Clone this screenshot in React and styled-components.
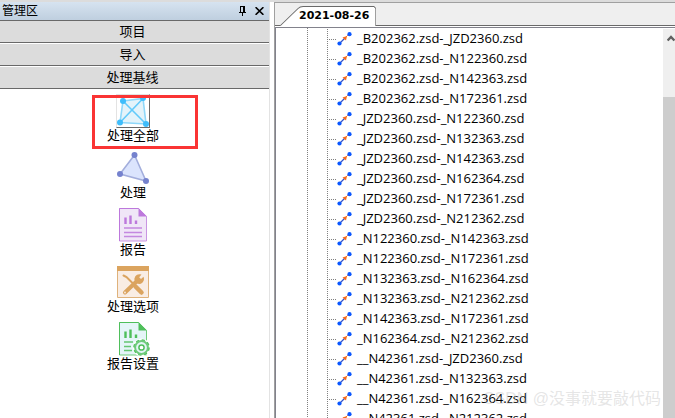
import React, { useState } from "react";
import styled, { createGlobalStyle } from "styled-components";

const GlobalStyle = createGlobalStyle`
    * {
        box-sizing: border-box;
    }

    body {
        margin: 0;
        overflow: hidden;
        background: #fff;
        color: #000;
        font-family: "Liberation Sans", "Noto Sans CJK SC", sans-serif;
        font-size: 13px;
    }

    button {
        margin: 0;
        padding: 0;
        border: 0;
        background: none;
        color: inherit;
        font: inherit;
    }
`;

// Layout
const Window = styled.div`
    display: flex;
    gap: 4px;
    height: 100vh;
    border-top: 2px solid #dcdcdc;
`;

const Sidebar = styled.aside`
    display: flex;
    flex-direction: column;
    flex: 0 0 40%;
    min-width: 0;
    border-right: 1px solid #e3e3e3;
`;

const SidebarHeader = styled.header`
    display: flex;
    align-items: center;
    height: 19px;
    padding: 0 1px 0 2px;
    border-bottom: 1px solid #696969;
    background: linear-gradient(180deg, #d6e3f0 0%, #bfcfdf 100%);
`;

const SidebarTitle = styled.h1`
    flex: 1;
    margin: 0;
    font-size: 12px;
    font-weight: 400;
    line-height: 18px;
`;

const HeaderButton = styled.button`
    display: flex;
    align-items: center;
    justify-content: center;
    width: 17px;
    height: 16px;
`;

const SectionButton = styled.button`
    height: 23px;
    padding-right: 4px;
    border-top: 1px solid #fff;
    border-bottom: 1px solid #696969;
    background: #dcdcdc;
    line-height: 20px;
    text-align: center;

    &:first-of-type {
        height: 22px;
        border-top: 0;
    }
`;

const ToolList = styled.div`
    display: flex;
    flex-direction: column;
    align-items: center;
    padding-top: 5px;
    padding-right: 3px;
`;

const ToolButton = styled.button`
    position: relative;
    display: flex;
    flex-direction: column;
    align-items: center;
    height: 57px;
    line-height: 16px;
`;

const ToolIcon = styled.span`
    display: flex;
    align-items: center;
    justify-content: center;
    width: 34px;
    height: 34px;
    border: 1px solid;
    border-color: ${({ $active }) =>
        $active ? "#e3e3e3 #696969 #696969 #e3e3e3" : "transparent"};
`;

const Highlight = styled.span`
    position: absolute;
    top: 1px;
    left: -15px;
    width: 106px;
    height: 54px;
    border: 3px solid #fa3434;
    pointer-events: none;
`;

const Main = styled.main`
    position: relative;
    display: flex;
    flex-direction: column;
    flex: 1;
    min-width: 0;
    border-top: 1px solid #a0a0a0;
    border-left: 1px solid #a0a0a0;
`;

const TabStrip = styled.div`
    display: flex;
    align-items: flex-end;
    height: 23px;
    padding-left: 5px;
    border-bottom: 1px solid #696969;
    background: #efefef;
`;

const Tab = styled.button`
    position: relative;
    height: 20px;
    margin-bottom: -1px;
    padding: 0 7px 0 19px;
    font-family: "DejaVu Sans", sans-serif;
    font-size: 11px;
    font-weight: 700;
    line-height: 20px;
`;

const TabShape = styled.svg`
    position: absolute;
    inset: 0;
    width: 100%;
    height: 100%;
`;

const TabLabel = styled.span`
    position: relative;
`;

const Pane = styled.div`
    display: flex;
    flex: 1;
    min-height: 0;
    margin-top: 1px;
    border-top: 1px solid #82828c;
    border-left: 1px solid #82828c;
`;

const Tree = styled.ul`
    flex: 1;
    min-width: 0;
    margin: 0;
    padding: 1px 0 0 31px;
    overflow: hidden;
    list-style: none;
    background:
        repeating-linear-gradient(180deg, #808080 0 1px, transparent 1px 2px)
            31px 0 / 1px 100% no-repeat,
        #fff;
`;

const TreeRow = styled.li`
    display: flex;
    align-items: center;
    height: 20px;
    padding-left: 20px;
    background: repeating-linear-gradient(
            180deg,
            #808080 0 1px,
            transparent 1px 2px
        )
        20px 0 / 1px 100% no-repeat;
    font-family: "Open Sans", sans-serif;
    font-size: 13px;
    line-height: 18px;
    white-space: nowrap;
`;

const Branch = styled.span`
    width: 10px;
    height: 1px;
    background: repeating-linear-gradient(
        90deg,
        #808080 0 1px,
        transparent 1px 2px
    );
`;

const RowLabel = styled.span`
    margin-left: 5px;
    padding-bottom: 2px;
`;

const Scrollbar = styled.div`
    display: flex;
    flex-direction: column;
    width: 12px;
    margin-top: 1px;
    overflow: hidden;
    background: #efefef;
`;

const ScrollUp = styled.button`
    display: flex;
    justify-content: flex-end;
    height: 17px;
    padding-top: 6px;
`;

const ScrollThumb = styled.div`
    flex: 1;
    margin-top: 51px;
    background: #cdcdcd;
`;

const Watermark = styled.span`
    position: absolute;
    right: 14px;
    bottom: 7px;
    color: rgba(190, 190, 190, 0.4);
    font-size: 16px;
    line-height: 24px;
    pointer-events: none;
`;

// Icons
const PinIcon = () => (
    <svg width="7" height="10" viewBox="0 0 7 10" shapeRendering="crispEdges">
        <path d="M1 0h5v6H1zM0 6h7v1H0zM3 7h1v3H3z" fill="#000" />
        <path d="M2 1h2v5H2z" fill="#cbd8e6" />
    </svg>
);

const CloseIcon = () => (
    <svg width="9" height="8" viewBox="0 0 9 8">
        <path d="M.6.2l7.8 7.6M8.4.2L.6 7.8" stroke="#000" strokeWidth="1.6" />
    </svg>
);

const NetworkIcon = () => (
    <svg width="32" height="32" viewBox="0 0 32 32">
        <path d="M6 6L26 3.5L29 29L3 27.5z" fill="#e4f3fa" />
        <g stroke="#8fd8fa" strokeWidth="1.6" fill="none">
            <path d="M6 6L26 3.5L29 29L3 27.5z" />
            <path d="M6 6L29 29M26 3.5L3 27.5" stroke="#62cafa" />
        </g>
        <g fill="#3fbdfb">
            <circle cx="6" cy="6" r="3" />
            <circle cx="26" cy="3" r="3" />
            <circle cx="29" cy="29" r="3" />
            <circle cx="3" cy="27.5" r="3" />
        </g>
    </svg>
);

const TriangleIcon = () => (
    <svg width="32" height="32" viewBox="0 0 32 32">
        <path
            d="M17.5 3L3 22L29 29z"
            fill="#dbe4fd"
            stroke="#a3aedc"
            strokeWidth="1.6"
        />
        <g fill="#7582ce">
            <circle cx="17.5" cy="3" r="3" />
            <circle cx="3" cy="22" r="3" />
            <circle cx="29" cy="29" r="3" />
        </g>
    </svg>
);

const ReportIcon = ({ color, light, fill, gear }) => (
    <svg width="32" height="34" viewBox="0 0 32 34" overflow="visible">
        <path d="M2.5.5h19l8 8v24.500h-27z" fill={fill} stroke={light} />
        <path d="M2.5.5h19M2.5 33V.5" stroke={color} fill="none" />
        <path d="M21.5 0L30 8.500h-8.500z" fill={color} />
        <path
            d="M8.500 9.500v6.500M13.500 7.500v8.500M19 12.500v3.500"
            stroke={color}
            strokeWidth="2.4"
        />
        <path
            d={gear ? "M7 20h9M7 24.500h7M7 28.500h8" : "M7 20h18M7 24.500h18M7 28.500h18"}
            stroke={color}
            strokeWidth="1.5"
            opacity="0.85"
        />
        {gear && (
            <g>
                <circle cx="24.500" cy="25.500" r="9" fill="#fff" />
                <circle
                    cx="24.500"
                    cy="25.500"
                    r="7.400"
                    fill="none"
                    stroke={color}
                    strokeWidth="1.8"
                    strokeDasharray="3.2 2.611"
                />
                <circle
                    cx="24.500"
                    cy="25.500"
                    r="6.400"
                    fill="#e5f5f8"
                    stroke={light}
                    strokeWidth="2"
                />
                <circle
                    cx="24.500"
                    cy="25.500"
                    r="2.600"
                    fill="#fff"
                    stroke={color}
                    strokeWidth="1.5"
                />
            </g>
        )}
    </svg>
);

const OptionsIcon = () => (
    <svg width="32" height="32" viewBox="0 0 32 32">
        <path d="M.5.5h31v31H.5z" fill="#f9ede4" stroke="#dfb27b" />
        <path d="M0 0h32v5H0z" fill="#dba45f" />
        <g stroke="#dba45f" strokeLinecap="round" fill="none">
            <path d="M6.500 9.500l3 1.500 8 8" strokeWidth="2" />
            <path d="M18.500 20.500l6 6" strokeWidth="4.5" />
            <path d="M20.500 14.500L8 26.500" strokeWidth="4" />
        </g>
        <path
            d="M18 15.500a5 5 0 0 1 5-7.300l1.500.3-2.300 2.700 1.800 1.800 2.500-2.200a5 5 0 0 1-6.500 6.700z"
            fill="#dba45f"
        />
        <circle cx="8" cy="26.500" r="0.9" fill="#f9ede4" />
    </svg>
);

const BaselineIcon = () => (
    <svg width="15" height="14" viewBox="0 0 15 14">
        <path d="M2.500 11.500L8 6" stroke="#3454c8" strokeWidth="1.2" />
        <path d="M7 7l5-5" stroke="#f58b4d" strokeWidth="1" />
        <path d="M5.500 5.500L10 4L9 8.500z" fill="#fa6a1a" />
        <circle cx="2.500" cy="11.500" r="2.1" fill="#0b57ff" />
        <circle cx="12.500" cy="2.200" r="2.1" fill="#0b57ff" />
    </svg>
);

const ChevronUpIcon = () => (
    <svg width="8" height="7" viewBox="0 0 8 7">
        <path
            d="M.6 5.500L4 2l3.400 3.500"
            fill="none"
            stroke="#606060"
            strokeWidth="2.4"
        />
    </svg>
);

const SECTIONS = ["项目", "导入", "处理基线"];

const TOOLS = [
    { label: "处理全部", icon: <NetworkIcon /> },
    { label: "处理", icon: <TriangleIcon /> },
    {
        label: "报告",
        icon: <ReportIcon color="#bd78dc" light="#c995e2" fill="#f0e6f7" />,
    },
    { label: "处理选项", icon: <OptionsIcon /> },
    {
        label: "报告设置",
        icon: <ReportIcon color="#4fbf5b" light="#6fcb7b" fill="#e5f5f8" gear />,
    },
];

const BASELINES = [
    "_B202362.zsd-_JZD2360.zsd",
    "_B202362.zsd-_N122360.zsd",
    "_B202362.zsd-_N142363.zsd",
    "_B202362.zsd-_N172361.zsd",
    "_JZD2360.zsd-_N122360.zsd",
    "_JZD2360.zsd-_N132363.zsd",
    "_JZD2360.zsd-_N142363.zsd",
    "_JZD2360.zsd-_N162364.zsd",
    "_JZD2360.zsd-_N172361.zsd",
    "_JZD2360.zsd-_N212362.zsd",
    "_N122360.zsd-_N142363.zsd",
    "_N122360.zsd-_N172361.zsd",
    "_N132363.zsd-_N162364.zsd",
    "_N132363.zsd-_N212362.zsd",
    "_N142363.zsd-_N172361.zsd",
    "_N162364.zsd-_N212362.zsd",
    "__N42361.zsd-_JZD2360.zsd",
    "__N42361.zsd-_N132363.zsd",
    "__N42361.zsd-_N162364.zsd",
    "__N42361.zsd-_N212362.zsd",
];

const App = () => {
    const [active, setActive] = useState("处理全部");

    return (
        <Window>
            <GlobalStyle />
            <Sidebar>
                <SidebarHeader>
                    <SidebarTitle>管理区</SidebarTitle>
                    <HeaderButton aria-label="固定">
                        <PinIcon />
                    </HeaderButton>
                    <HeaderButton aria-label="关闭">
                        <CloseIcon />
                    </HeaderButton>
                </SidebarHeader>
                {SECTIONS.map((name) => (
                    <SectionButton key={name}>{name}</SectionButton>
                ))}
                <ToolList>
                    {TOOLS.map(({ label, icon }) => (
                        <ToolButton key={label} onClick={() => setActive(label)}>
                            <ToolIcon $active={label === active}>{icon}</ToolIcon>
                            {label}
                            {label === active && <Highlight />}
                        </ToolButton>
                    ))}
                </ToolList>
            </Sidebar>
            <Main>
                <TabStrip role="tablist">
                    <Tab role="tab" aria-selected="true">
                        <TabShape viewBox="0 0 96 20" preserveAspectRatio="none">
                            <path
                                d="M.5 19.500L18 2.500Q20 .5 23 .5H93.500L95.500 2.500V20H.5z"
                                fill="#fff"
                            />
                            <path
                                d="M.5 19.500L18 2.500Q20 .5 23 .5H93.500L95.500 2.500V20"
                                fill="none"
                                stroke="#696969"
                            />
                        </TabShape>
                        <TabLabel>2021-08-26</TabLabel>
                    </Tab>
                </TabStrip>
                <Pane>
                    <Tree role="tree" aria-label="2021-08-26">
                        {BASELINES.map((name) => (
                            <TreeRow key={name} role="treeitem">
                                <Branch />
                                <BaselineIcon />
                                <RowLabel>{name}</RowLabel>
                            </TreeRow>
                        ))}
                    </Tree>
                    <Scrollbar>
                        <ScrollUp aria-label="向上滚动">
                            <ChevronUpIcon />
                        </ScrollUp>
                        <ScrollThumb />
                    </Scrollbar>
                </Pane>
                <Watermark>CSDN @没事就要敲代码</Watermark>
            </Main>
        </Window>
    );
};

export default App;
